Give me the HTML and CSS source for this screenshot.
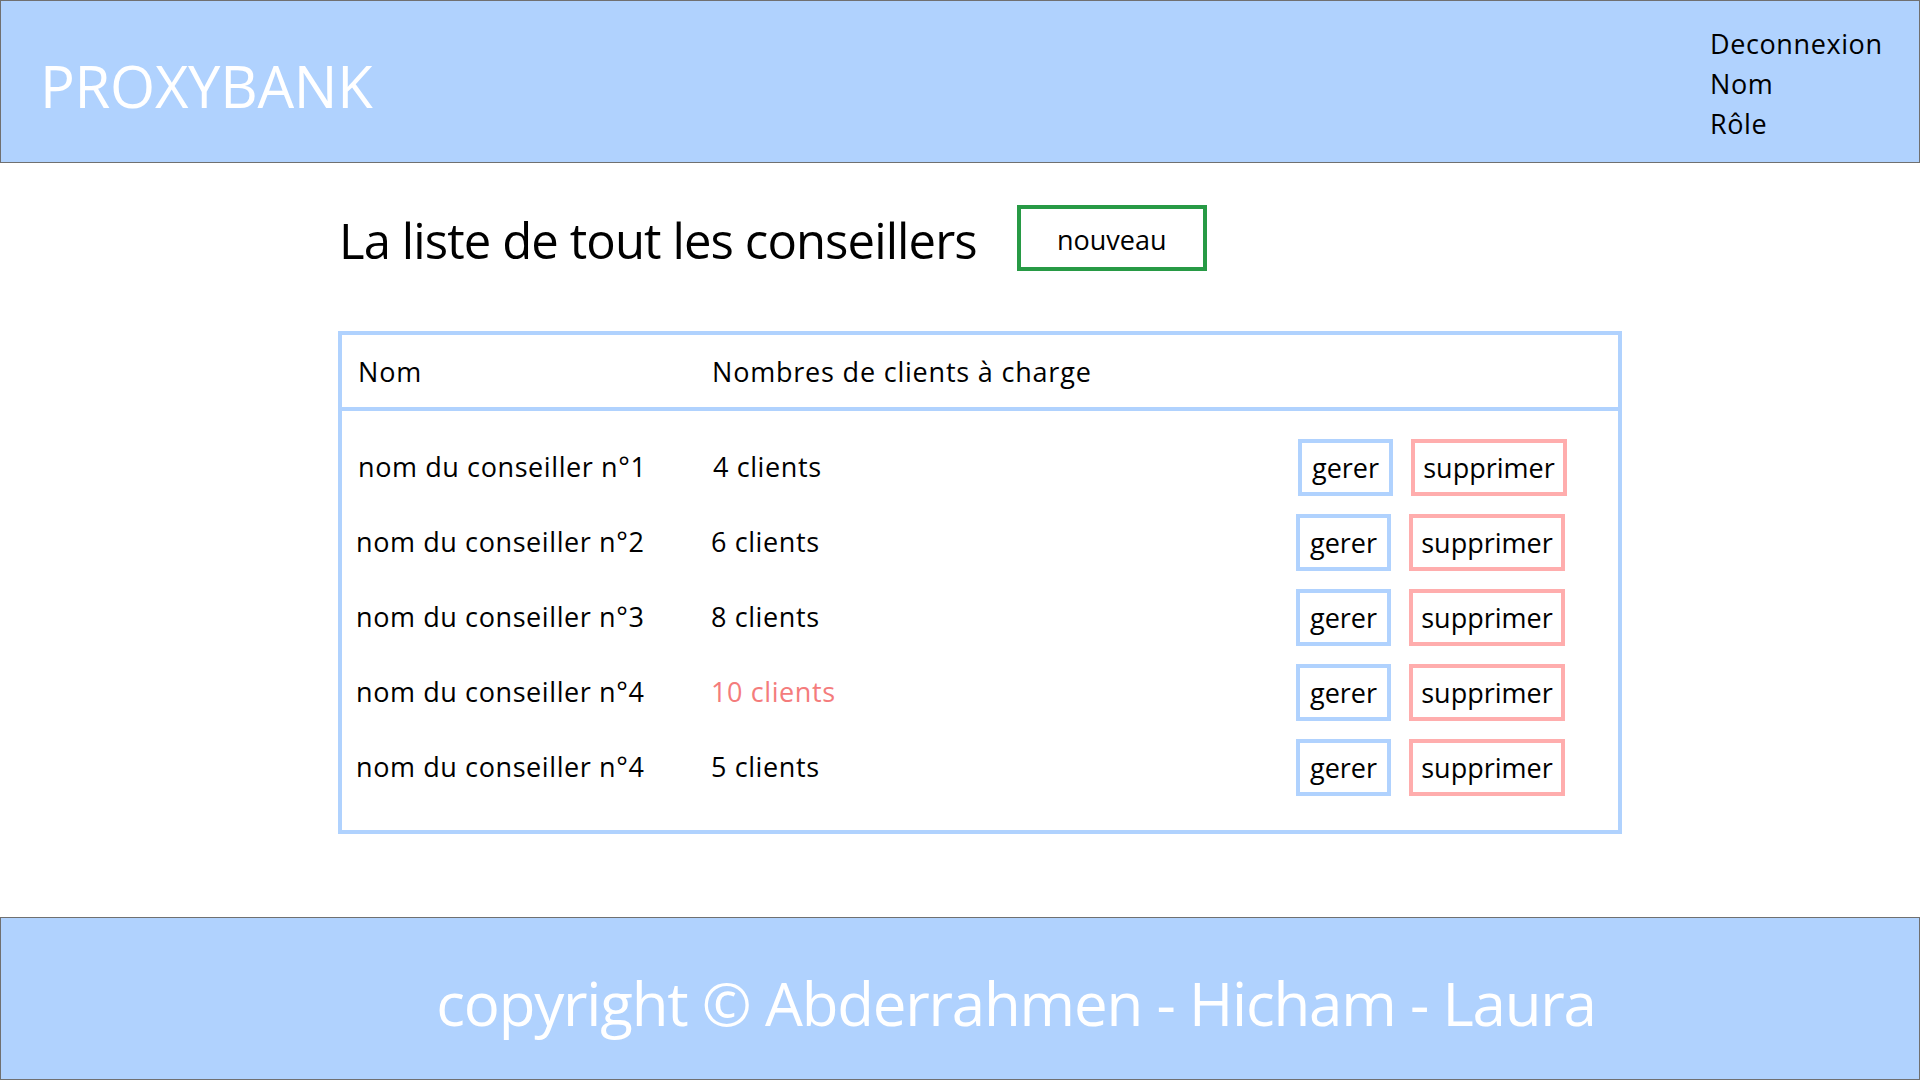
FILE: index.html
```html
<!DOCTYPE html>
<html lang="fr">
<head>
<meta charset="utf-8">
<title>ProxyBank - Conseillers</title>
<link rel="stylesheet" href="styles.css">
</head>
<body>
<div class="page">
  <header class="topbar">
    <div class="logo">PROXYBANK</div>
    <nav class="usermenu">
      <div class="usermenu-item">Deconnexion</div>
      <div class="usermenu-item">Nom</div>
      <div class="usermenu-item">Rôle</div>
    </nav>
  </header>

  <main class="content">
    <div class="title-row">
      <h1 class="title">La liste de tout les conseillers</h1>
      <button class="btn btn-new">nouveau</button>
    </div>

    <div class="table">
      <div class="table-head">
        <div class="col-name">Nom</div>
        <div class="col-count">Nombres de clients à charge</div>
      </div>
      <div class="table-body">
        <div class="row row-first">
          <div class="col-name">nom du conseiller n°1</div>
          <div class="col-count">4 clients</div>
          <div class="actions">
            <button class="btn btn-manage">gerer</button>
            <button class="btn btn-delete">supprimer</button>
          </div>
        </div>
        <div class="row">
          <div class="col-name">nom du conseiller n°2</div>
          <div class="col-count">6 clients</div>
          <div class="actions">
            <button class="btn btn-manage">gerer</button>
            <button class="btn btn-delete">supprimer</button>
          </div>
        </div>
        <div class="row">
          <div class="col-name">nom du conseiller n°3</div>
          <div class="col-count">8 clients</div>
          <div class="actions">
            <button class="btn btn-manage">gerer</button>
            <button class="btn btn-delete">supprimer</button>
          </div>
        </div>
        <div class="row">
          <div class="col-name">nom du conseiller n°4</div>
          <div class="col-count col-alert">10 clients</div>
          <div class="actions">
            <button class="btn btn-manage">gerer</button>
            <button class="btn btn-delete">supprimer</button>
          </div>
        </div>
        <div class="row">
          <div class="col-name">nom du conseiller n°4</div>
          <div class="col-count">5 clients</div>
          <div class="actions">
            <button class="btn btn-manage">gerer</button>
            <button class="btn btn-delete">supprimer</button>
          </div>
        </div>
      </div>
    </div>
  </main>

  <footer class="footer">
    <div class="copyright">copyright © Abderrahmen - Hicham - Laura</div>
  </footer>
</div>
</body>
</html>
```

FILE: styles.css
```css
* {
  box-sizing: border-box;
}

html, body {
  margin: 0;
  padding: 0;
}

body {
  font-family: "Open Sans", "Noto Sans", "Liberation Sans", sans-serif;
  color: #000;
  background: #fff;
}

.page {
  display: flex;
  flex-direction: column;
  height: 1080px;
}

/* Header */
.topbar {
  height: 163px;
  flex: 0 0 163px;
  background: #b0d2fe;
  border: 1px solid #707070;
  display: flex;
  justify-content: space-between;
  align-items: flex-start;
}

.logo {
  color: #fff;
  font-size: 58px;
  line-height: 1;
  padding-left: 39px;
  padding-top: 56px;
  letter-spacing: -0.3px;
}

.usermenu {
  padding-top: 23px;
  padding-right: 36px;
  width: 209px;
}

.usermenu-item {
  font-size: 27px;
  line-height: 40px;
  letter-spacing: 0.6px;
}

/* Content */
.content {
  flex: 1 1 auto;
  padding-left: 338px;
}

.title-row {
  display: flex;
  align-items: center;
  gap: 40px;
  padding-top: 42px;
  height: 108px;
}

.title {
  margin: 0;
  font-weight: 400;
  font-size: 49px;
  line-height: 62px;
  padding-left: 1px;
  padding-top: 4px;
  letter-spacing: -0.9px;
}

.btn {
  font-family: inherit;
  background: #fff;
  color: #000;
  font-size: 27px;
  line-height: 1;
  padding: 0;
  margin: 0;
  border: 4px solid;
  display: flex;
  align-items: center;
  justify-content: center;
  cursor: pointer;
}

.btn-new {
  width: 190px;
  height: 66px;
  border-color: #279a45;
  padding-top: 2px;
}

.btn-manage {
  width: 95px;
  height: 57px;
  border-color: #b0d2fe;
}

.btn-delete {
  width: 156px;
  height: 57px;
  border-color: #ffadad;
}

/* Table */
.table {
  margin-top: 60px;
  width: 1284px;
  height: 503px;
  border: 4px solid #b0d2fe;
  font-size: 27px;
}

.table-head {
  height: 76px;
  border-bottom: 4px solid #b0d2fe;
  display: flex;
  align-items: center;
  padding-left: 16px;
  letter-spacing: 0.8px;
}

.table-head .col-name {
  width: 354px;
}

.table-body {
  padding-top: 28px;
  display: flex;
  flex-direction: column;
  gap: 18px;
}

.row {
  display: flex;
  align-items: center;
  height: 57px;
  padding-left: 14px;
  padding-right: 53px;
}

.row-first {
  padding-left: 16px;
  padding-right: 51px;
}

.row .col-name,
.row .col-count {
  letter-spacing: 0.6px;
  padding-bottom: 3px;
}

.row .col-name {
  width: 355px;
}

.row .col-count {
  flex: 1 1 auto;
}

.col-alert {
  color: #f47c7c;
}

.actions {
  display: flex;
  gap: 18px;
}

/* Footer */
.footer {
  flex: 0 0 163px;
  height: 163px;
  background: #b0d2fe;
  border: 1px solid #707070;
  display: flex;
  align-items: center;
  justify-content: center;
  padding-left: 112px;
}

.copyright {
  color: #fff;
  font-size: 60px;
  line-height: 1;
  padding-top: 8px;
  letter-spacing: -1.2px;
}
```
